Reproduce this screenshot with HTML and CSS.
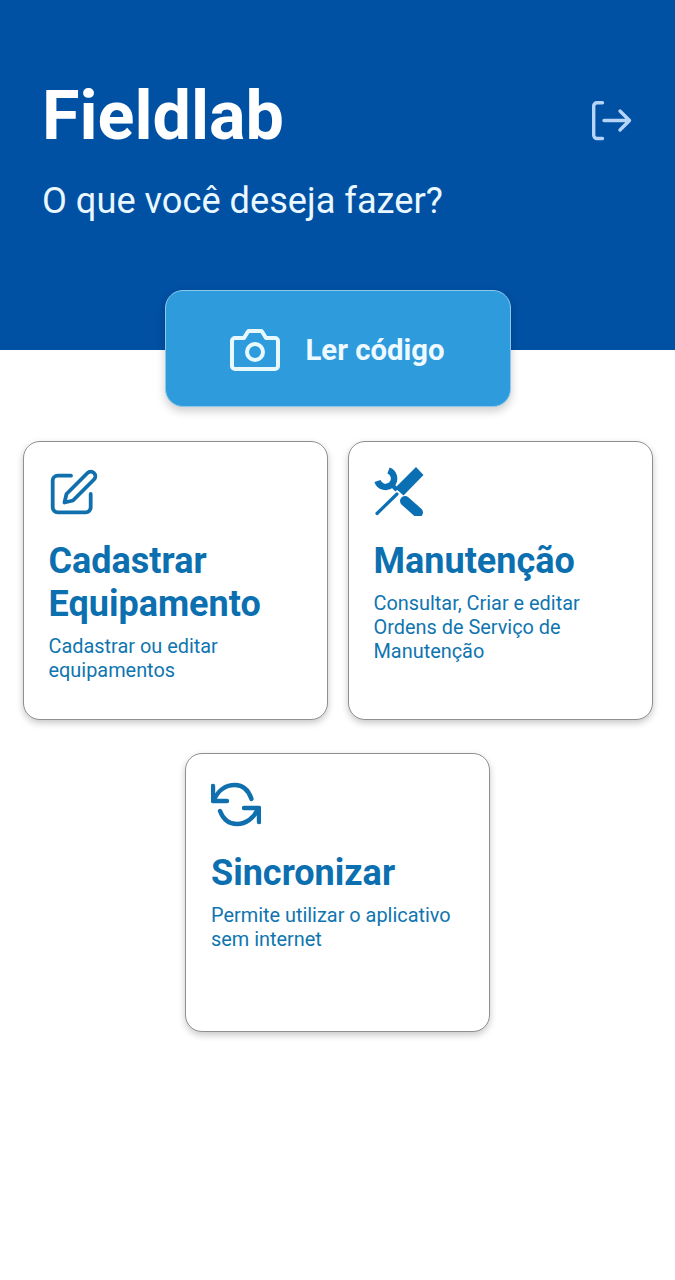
FILE: index.html
```html
<!DOCTYPE html>
<html lang="pt-BR">
<head>
<meta charset="utf-8">
<title>Fieldlab</title>
<link rel="stylesheet" href="styles.css">
</head>
<body>
<header class="hero">
  <div class="hero-text">
    <h1 class="brand">Fieldlab</h1>
    <p class="tagline">O que você deseja fazer?</p>
  </div>
  <svg class="logout" viewBox="0 0 40 40" fill="none" stroke="#b5d4f7" stroke-width="3.400" stroke-linecap="round" stroke-linejoin="round">
    <path d="M10.500 1.800H5a3.300 3.300 0 0 0-3.300 3.300v29A3.300 3.300 0 0 0 5 37.500h5.500"/>
    <path d="M12 19.500h25.500M28 10l9.500 9.500-9.500 9.500"/>
  </svg>
</header>
<main class="content">
  <button class="scan">
    <svg class="scan-icon" viewBox="0 0 50 42" fill="none" stroke="#e8f8ff" stroke-width="4" stroke-linecap="round" stroke-linejoin="round">
      <path d="M5 9h9l4-6.500a1.500 1.500 0 0 1 1-.5h12a1.500 1.500 0 0 1 1 .5l4 6.500h9a3 3 0 0 1 3 3v25a3 3 0 0 1-3 3H5a3 3 0 0 1-3-3V12a3 3 0 0 1 3-3z"/>
      <circle cx="25" cy="23" r="8"/>
    </svg>
    <span class="scan-label">Ler código</span>
  </button>
  <section class="cards">
    <article class="card">
      <svg class="card-icon" viewBox="0 0 50 50" fill="none" stroke="#0f70ad" stroke-width="3.800" stroke-linecap="round" stroke-linejoin="round">
        <path d="M22 9.700H8.700a5 5 0 0 0-5 5v26.600a5 5 0 0 0 5 5h28a5 5 0 0 0 5-5V28"/>
        <path d="M38.500 7a4.500 4.500 0 0 1 6.500 6.500L24 34.500l-8.500 2 2-8.500z"/>
      </svg>
      <h2 class="card-title">Cadastrar Equipamento</h2>
      <p class="card-desc">Cadastrar ou editar equipamentos</p>
    </article>
    <article class="card">
      <svg class="card-icon" viewBox="0 0 50 50" fill="none" stroke="#0b6fb4">
        <path d="M14.500 4.500A8.500 8.500 0 1 1 3.500 15" stroke-width="6.400"/>
        <path d="M17 18l6 6" stroke-width="4.400"/>
        <path d="M42 1l7.500 8-20 20.500-8.500-7.500z" fill="#0b6fb4" stroke="none"/>
        <path d="M23 28L3 47.500" stroke-width="3.200" stroke-linecap="round"/>
        <path d="M31 35l13 11.500" stroke-width="10" stroke-linecap="round"/>
      </svg>
      <h2 class="card-title">Manutenção</h2>
      <p class="card-desc">Consultar, Criar e editar Ordens de Serviço de Manutenção</p>
    </article>
    <article class="card">
      <svg class="card-icon" viewBox="0 -2 50 50" fill="none" stroke="#0f70ad" stroke-width="4.400" stroke-linecap="round" stroke-linejoin="round">
        <path d="M2 6v15h14"/>
        <path d="M3 20C7 10 15 5 24 5c8 0 13.500 5 16.500 14"/>
        <path d="M33 28h15v14"/>
        <path d="M47 29C43 38 35 44 26 44c-8 0-14-5-17-13"/>
      </svg>
      <h2 class="card-title">Sincronizar</h2>
      <p class="card-desc">Permite utilizar o aplicativo sem internet</p>
    </article>
  </section>
</main>
</body>
</html>
```

FILE: styles.css
```css
* {
  box-sizing: border-box;
}

html,
body {
  margin: 0;
  padding: 0;
  background: #ffffff;
}

body {
  width: 675px;
  height: 1280px;
  overflow: hidden;
  font-family: Roboto, "Liberation Sans", sans-serif;
}

.hero {
  height: 350px;
  background: #0050a4;
  padding: 78px 43px 0 42px;
  display: flex;
  justify-content: space-between;
  align-items: flex-start;
}

.brand {
  margin: 0;
  font-size: 68.300px;
  line-height: 76px;
  font-weight: 700;
  color: #ffffff;
}

.tagline {
  margin: 26px 0 0;
  font-size: 36.200px;
  line-height: 42px;
  font-weight: 400;
  color: #e9f8ff;
}

.logout {
  width: 40px;
  height: 40px;
  margin-top: 23px;
}

.content {
  display: flex;
  flex-direction: column;
  align-items: center;
}

.scan {
  position: relative;
  width: 346px;
  height: 117px;
  margin-top: -60px;
  border: 1px solid #8cc8ee;
  border-radius: 18px;
  background: #2e9bdd;
  box-shadow: 0 4px 10px rgba(0, 0, 0, 0.2);
  display: flex;
  align-items: center;
  justify-content: center;
  gap: 25px;
  padding: 2px 0 0;
  font-family: inherit;
}

.scan-icon {
  width: 50px;
  height: 42px;
}

.scan-label {
  font-size: 29.300px;
  font-weight: 700;
  color: #eefaff;
}

.cards {
  width: 675px;
  margin-top: 34px;
  display: flex;
  flex-wrap: wrap;
  justify-content: center;
  gap: 33px 20px;
}

.card {
  width: 305px;
  height: 279px;
  padding: 24px 24px 0 25px;
  border: 1px solid #8f8f8f;
  border-radius: 17px;
  background: #ffffff;
  box-shadow: 0 3px 7px rgba(0, 0, 0, 0.22);
}

.card-icon {
  display: block;
  width: 50px;
  height: 50px;
}

.card-title {
  margin: 24px 0 0;
  font-size: 36px;
  line-height: 43px;
  font-weight: 700;
  color: #0b6fb0;
}

.card-desc {
  margin: 9px 0 0;
  font-size: 19.900px;
  line-height: 24px;
  font-weight: 400;
  color: #0f75b0;
}
```
